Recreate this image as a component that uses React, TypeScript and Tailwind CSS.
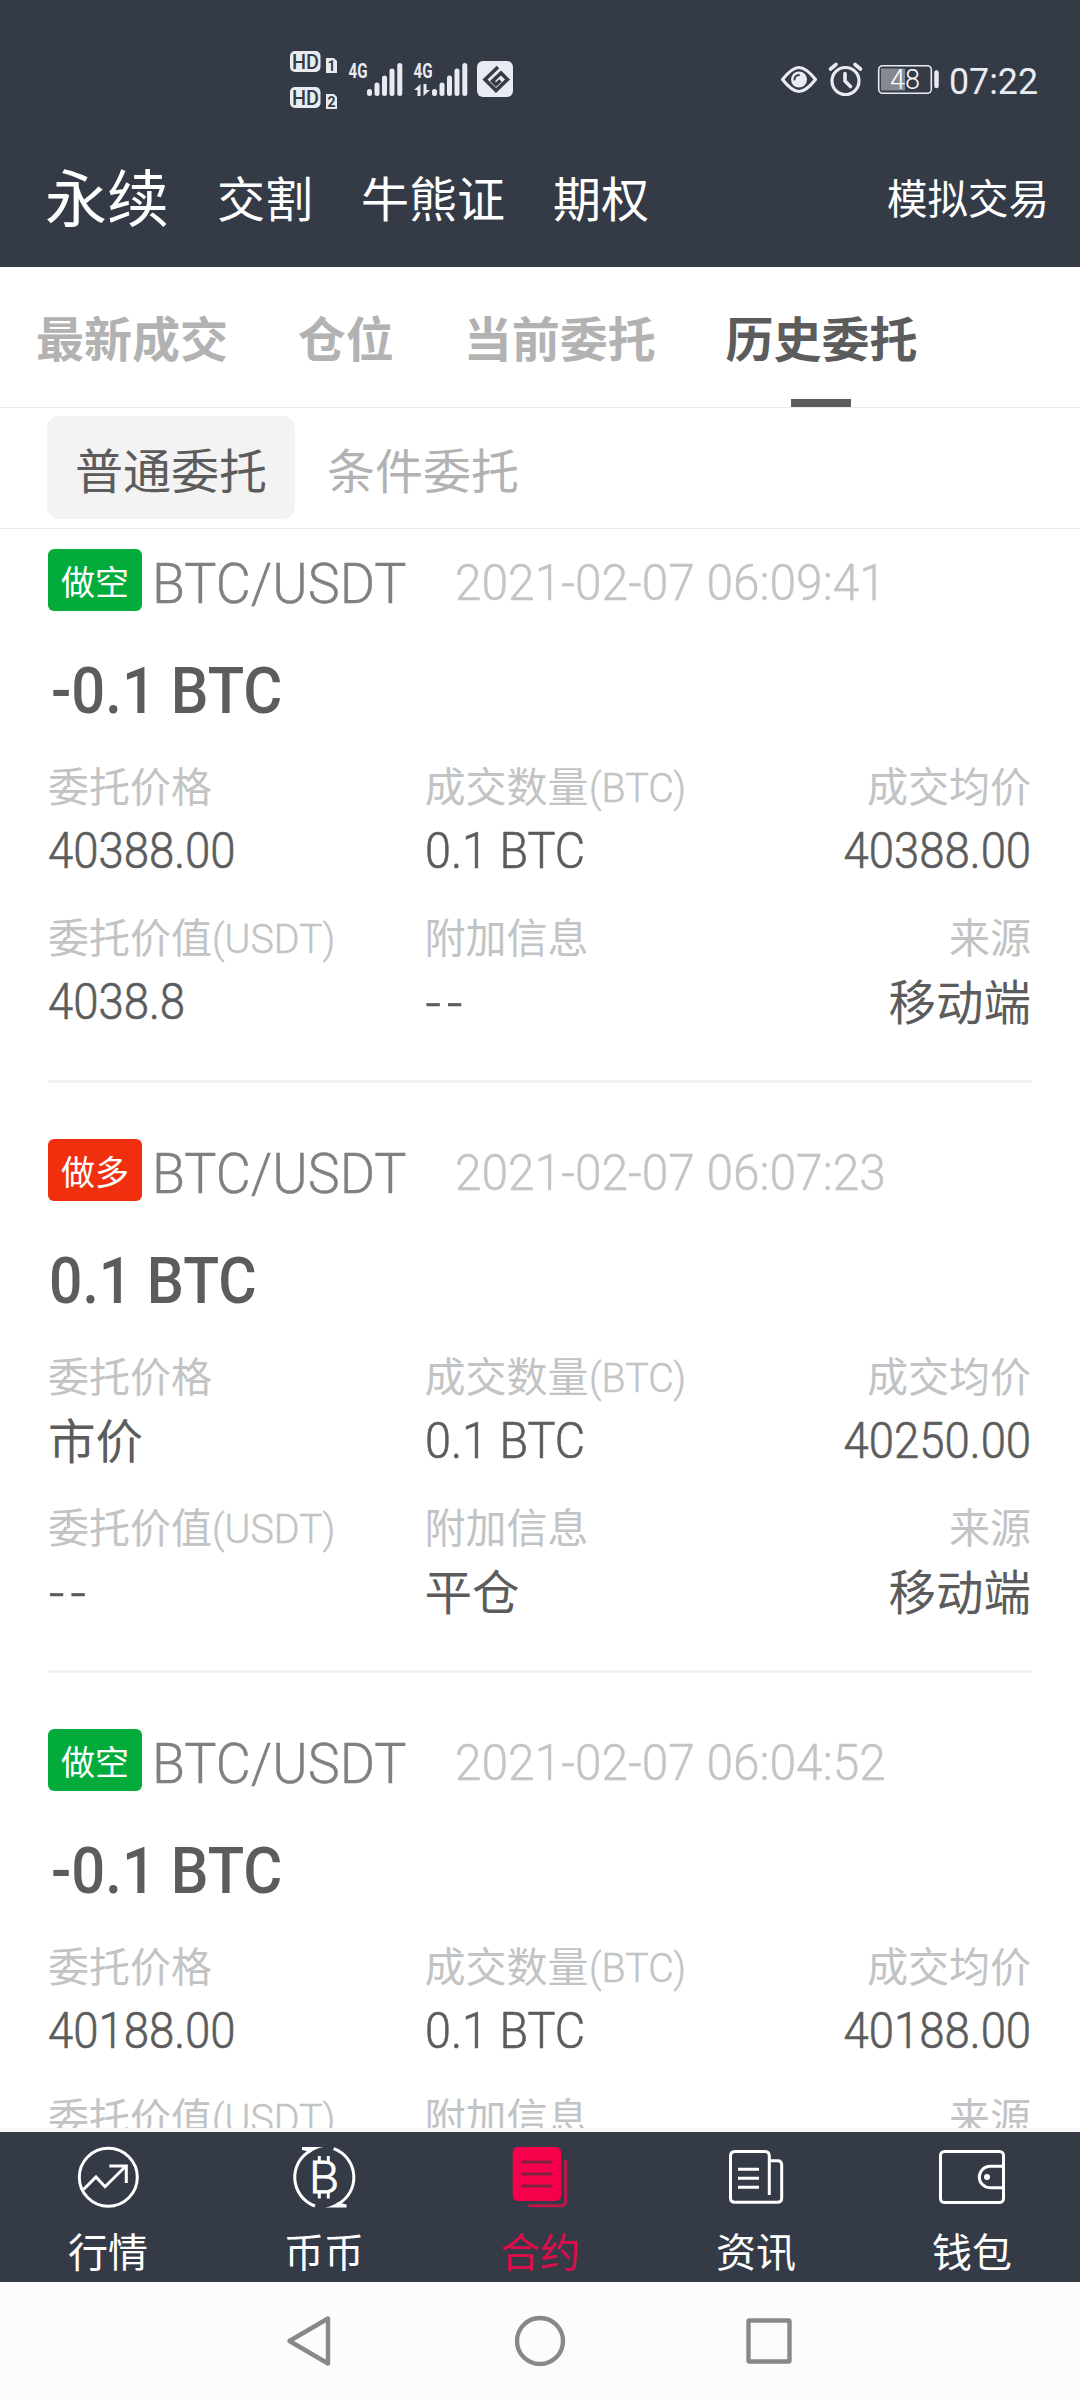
import type { ReactNode } from "react"

type Order = {
  side: "short" | "long"
  time: string
  amount: string
  price: string
  filled: string
  avg: string
  value?: string
  extra?: string
  source?: string
}

const orders: Order[] = [
  {
    side: "short",
    time: "2021-02-07 06:09:41",
    amount: "-0.1 BTC",
    price: "40388.00",
    filled: "0.1 BTC",
    avg: "40388.00",
    value: "4038.8",
    extra: "--",
    source: "移动端",
  },
  {
    side: "long",
    time: "2021-02-07 06:07:23",
    amount: "0.1 BTC",
    price: "市价",
    filled: "0.1 BTC",
    avg: "40250.00",
    value: "--",
    extra: "平仓",
    source: "移动端",
  },
  {
    side: "short",
    time: "2021-02-07 06:04:52",
    amount: "-0.1 BTC",
    price: "40188.00",
    filled: "0.1 BTC",
    avg: "40188.00",
  },
]

export default function App() {
  return (
    <div className="flex h-[2400px] w-[1080px] flex-col overflow-hidden bg-white font-['Roboto','Noto_Sans_CJK_SC',sans-serif] text-[#5c5c5c]">
      <header className="h-[267px] shrink-0 bg-[#343b47] text-white">
        <StatusBar />
        <nav className="flex h-[130px] items-center pl-[45px] pr-[31px] pt-px whitespace-nowrap">
          <span className="pt-px text-[62px] leading-none">永续</span>
          <span className="ml-12 text-5xl">交割</span>
          <span className="ml-12 text-5xl">牛熊证</span>
          <span className="ml-12 text-5xl">期权</span>
          <span className="ml-auto text-[40.5px]">模拟交易</span>
        </nav>
      </header>

      {/* Tabs */}
      <nav className="flex h-[141px] shrink-0 gap-[69.8px] border-b border-[#ececec] pl-9 text-5xl font-bold text-[#b2b2b2]">
        <Tab>最新成交</Tab>
        <Tab>仓位</Tab>
        <Tab>当前委托</Tab>
        <Tab active>历史委托</Tab>
      </nav>

      {/* Order type */}
      <div className="flex h-[121px] shrink-0 items-center border-b border-[#ececec] pb-px pl-[47px] text-5xl">
        <span className="flex h-[103px] w-[248px] items-center justify-center rounded-xl bg-[#f3f3f3] pt-[10px]">普通委托</span>
        <span className="ml-8 pt-[10px] text-[#b2b2b2]">条件委托</span>
      </div>

      {/* Orders */}
      <main className="min-h-0 flex-1 overflow-hidden px-12 pt-5">
        {orders.map((order) => (
          <OrderCard key={order.time} order={order} />
        ))}
      </main>

      {/* Bottom menu */}
      <nav className="grid h-[154px] shrink-0 grid-cols-5 border-t-4 border-[#f7f7f7] bg-[#343b47] text-white">
        <MenuItem label="行情">
          <circle cx="36.3" cy="33.3" r="29" />
          <path d="M11.5 45.5 24 33 33 42.7 54 22M37.3 22H54.3V39" />
        </MenuItem>
        <MenuItem label="币币">
          <path d="M27 62A30.5 30.5 0 0 1 23 6.3M45.6 4.6A30.5 30.5 0 0 1 49.6 60.3" />
          <path d="M14 3H35.5C30 4 27 5.5 23 8L14 6ZM58.6 63.6H37.1C42.6 62.6 45.6 61.1 49.6 58.6L58.6 60.6Z" fill="currentColor" stroke="none" />
          <text x="21" y="48.5" fontSize="44" fontWeight="300" textLength="30" lengthAdjust="spacingAndGlyphs" fill="currentColor" stroke="currentColor" strokeWidth="0.8">
            B
          </text>
          <path d="M31.3 12V19M40.3 12V19M31.3 47.5V54.5M40.3 47.5V54.5" />
        </MenuItem>
        <MenuItem label="合约" active>
          <rect x="8.7" y="3" width="48.3" height="54" rx="5" fill="#f4004b" stroke="none" />
          <path d="M17.7 18H48.3M17.7 30H48.3M17.7 42H48.3" stroke="#84203f" />
          <path d="M61.7 16V57Q61.7 61.7 57 61.7H24.5" stroke="#bf174a" />
        </MenuItem>
        <MenuItem label="资讯">
          <path d="M49.3 51V12Q49.3 7.5 45 7.5H15Q10.5 7.5 10.5 12V54Q10.5 58.3 15 58.3H57.5Q61.7 58.3 61.7 54V21Q61.7 16.7 57.5 16.7H50" />
          <path d="M18 25.3H39M18 34.3H39M18 43.3H39" />
        </MenuItem>
        <MenuItem label="钱包">
          <rect x="4.5" y="7.5" width="63" height="51" rx="4" />
          <path d="M67.5 22.3H54a10.7 10.7 0 0 0 0 21.4H67.5" />
          <circle cx="51" cy="33" r="3" fill="currentColor" stroke="none" />
        </MenuItem>
      </nav>

      {/* System keys */}
      <div className="flex h-[118px] shrink-0 items-center bg-[#fcfcfc] pl-[285px]">
        <svg width="510" height="54" viewBox="285 2314 510 54" fill="none" stroke="#888" strokeWidth="4.4" strokeLinejoin="round">
          <path d="M328 2318.5V2363.5L289.5 2341Z" />
          <circle cx="540" cy="2341" r="23" />
          <rect x="748.5" y="2320.5" width="41" height="41" rx="1" />
        </svg>
      </div>
    </div>
  )
}

function StatusBar() {
  return (
    <div className="flex h-[135px] items-start justify-between pl-[284px] pr-[38px] pt-[45px]">
      <svg width="236" height="70" viewBox="284 45 236 70" fill="#e9ebf2">
        <rect x="290" y="51" width="30.5" height="21" rx="5" />
        <rect x="290" y="87" width="30.5" height="21" rx="5" />
        <g fill="#343b47" fontSize="20.5" fontWeight="500">
          <text x="292" y="69" textLength="27" lengthAdjust="spacingAndGlyphs">HD</text>
          <text x="292" y="105" textLength="27" lengthAdjust="spacingAndGlyphs">HD</text>
        </g>
        <path d="M326 58H334L337 61V73H326ZM326 94H334L337 97V109H326Z" />
        <g fill="#343b47" fontSize="14" fontWeight="700">
          <text x="327.5" y="71">1</text>
          <text x="327.5" y="107">2</text>
        </g>
        <g fontSize="21" fontWeight="700">
          <text x="348.5" y="78" textLength="19" lengthAdjust="spacingAndGlyphs">4G</text>
          <text x="413.5" y="78" textLength="19" lengthAdjust="spacingAndGlyphs">4G</text>
        </g>
        <g stroke="#e9ebf2" strokeWidth="5" strokeLinecap="round">
          <path d="M369.5 91.5V93.5M377 85V93.5M384.5 78V93.5M392 71V93.5M399.8 65.5V93.5" />
          <path d="M434.5 91.5V93.5M442 85V93.5M449.5 78V93.5M457 71V93.5M464.8 65.5V93.5" />
        </g>
        <path d="M414 90 420.5 84V96H417.5V90ZM430 90 423.5 96V84H426.5V90Z" />
        <rect x="477" y="61" width="36" height="36" rx="6" />
        <path d="M498 67 485 79.5 496 90.5 507.5 79.5 501 73 492.5 81 496 84.5 500.5 80.5" fill="none" stroke="#343b47" strokeWidth="3.6" />
      </svg>

      <svg width="264" height="70" viewBox="778 45 264 70" fill="none" stroke="#e9ebf2" strokeWidth="3.2" strokeLinecap="round">
        <path d="M782.5 79.5C790 70 796 67.5 799 67.5S808 70 815.5 79.5C808 89 802 91.5 799 91.5S790 89 782.5 79.5Z" strokeLinejoin="round" />
        <circle cx="799" cy="79.5" r="8" fill="#e9ebf2" stroke="none" />
        <path d="M794.5 79.5A4.5 4.5 0 0 1 799 75" stroke="#343b47" strokeWidth="2" />
        <circle cx="845.5" cy="81" r="13.5" />
        <path d="M830.5 69 836 64.5M860.5 69 855 64.5M845 73.5V81L850.5 86.5" strokeWidth="3.6" />
        <rect x="878.7" y="65.7" width="52.6" height="27.6" rx="4" strokeWidth="1.6" />
        <rect x="881" y="68.5" width="24" height="22" fill="#858991" stroke="none" />
        <path d="M936.5 72.5V86" strokeWidth="4.5" />
        <text x="890" y="89" fontSize="28" fontWeight="300" fill="#fff" stroke="none" textLength="30" lengthAdjust="spacingAndGlyphs">48</text>
        <text x="949" y="94" fontSize="36" fill="#e9ebf2" stroke="none" textLength="89" lengthAdjust="spacingAndGlyphs">07:22</text>
      </svg>
    </div>
  )
}

function Tab({ active, children }: { active?: boolean; children: ReactNode }) {
  return (
    <span className={active ? "flex flex-col items-center text-[#5c5c5c]" : "flex flex-col items-center"}>
      <span className="flex flex-1 items-center pt-[7px]">{children}</span>
      {active && <span className="-mt-2 h-2 w-[60px] bg-[#5c5c5c]" />}
    </span>
  )
}

function OrderCard({ order }: { order: Order }) {
  const short = order.side === "short"
  return (
    <article className="mb-14 border-b-[3px] border-[#f2f2f2] pb-12 pr-px">
      <div className="flex h-[62px] items-center whitespace-nowrap">
        <span className={`flex h-[62px] w-[94px] items-center justify-center rounded-md pt-[6px] text-[34px] text-white ${short ? "bg-[#03ac3a]" : "bg-[#f02f0f]"}`}>
          {short ? "做空" : "做多"}
        </span>
        <span className="ml-[10px] mt-2 w-[303px] origin-left scale-x-[.963] text-[56px] font-light text-[#808080] [-webkit-text-stroke:0.4px]">
          BTC/USDT
        </span>
        <span className="mt-[7px] origin-left scale-x-[.957] text-[50px] font-light text-[#c3c4c5] [-webkit-text-stroke:0.4px]">{order.time}</span>
      </div>
      <div
        className={`mt-10 origin-left text-[65px] font-medium leading-[80px] ${
          short ? "ml-[3px] scale-x-[.92]" : "ml-px scale-x-[.905]"
        }`}
      >
        {order.amount}
      </div>
      <div className="mt-[35px] flex justify-between">
        <Field label="委托价格" value={order.price} />
        <Field label="成交数量" unit="(BTC)" value={order.filled} />
        <Field label="成交均价" value={order.avg} right />
      </div>
      <div className="mt-9 flex justify-between">
        <Field label="委托价值" unit="(USDT)" value={order.value} />
        <Field label="附加信息" value={order.extra} />
        <Field label="来源" value={order.source} right />
      </div>
    </article>
  )
}

function Field({ label, unit, value, right }: { label: string; unit?: string; value?: string; right?: boolean }) {
  return (
    <div className={right ? "flex flex-1 flex-col items-end" : "flex w-[376.5px] flex-col items-start"}>
      <div className="flex text-[41px] leading-[44px] text-[#c2c3c4]">
        {label}
        {unit && <span className="origin-left scale-x-[.96] font-light [-webkit-text-stroke:0.4px]">{unit}</span>}
      </div>
      {value && (
        <div className={`mt-[11px] leading-[60px] ${right ? "origin-right" : "origin-left"} ${valueStyle(value)}`}>{value}</div>
      )}
    </div>
  )
}

// latin values are set narrower than the CJK ones
function valueStyle(value: string) {
  if (value === "--") return "text-[54px] tracking-[6px] pl-px pt-[2px] -mb-[2px] font-light [-webkit-text-stroke:0.6px]"
  if (/[\u4e00-\u9fff]/.test(value)) return "text-[47.5px] pt-[2px] -mb-[2px]"
  if (value.endsWith("BTC")) return "scale-x-[.935] text-[50px] font-light [-webkit-text-stroke:0.6px]"
  return "scale-x-[.91] text-[50px] font-light [-webkit-text-stroke:0.6px]"
}

function MenuItem({ label, active, children }: { label: string; active?: boolean; children: ReactNode }) {
  return (
    <div className={`flex flex-col items-center pt-3 ${active ? "text-[#dc0d4b]" : ""}`}>
      <svg width="72" height="66" viewBox="0 0 72 66" fill="none" stroke="currentColor" strokeWidth="3">
        {children}
      </svg>
      <span className="mt-5 text-[40px] leading-[48px]">{label}</span>
    </div>
  )
}
